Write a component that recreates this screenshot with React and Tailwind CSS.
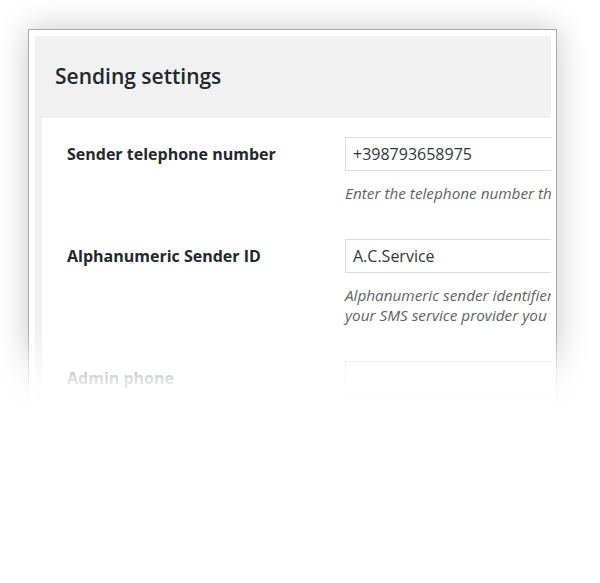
const fields = [
  {
    label: "Sender telephone number",
    value: "+398793658975",
    help: ["Enter the telephone number that will appear as the sender"],
  },
  {
    label: "Alphanumeric Sender ID",
    value: "A.C.Service",
    help: [
      "Alphanumeric sender identifier shown instead of the number",
      "your SMS service provider you can use up to eleven characters",
    ],
  },
  {
    label: "Admin phone",
    value: "",
    help: ["Phone number that receives the notifications"],
  },
];

const SettingRow = ({ field }) => (
  <div className="flex items-start">
    <div className="w-[303px] shrink-0 pl-[25px] h-[33px] flex items-center">
      <span className="text-[16px] font-bold text-[#23282d]">{field.label}</span>
    </div>
    <div className="flex flex-col">
      <div className="w-[320px] h-[34px] border border-[#ddd] bg-white px-[7px] flex items-center text-[16px] text-[#32373c] whitespace-nowrap">
        {field.value}
      </div>
      <div className="mt-[12px] text-[15.3px] italic text-[#5f6468] leading-[20px]">
        {field.help.map((line) => (
          <div key={line} className="whitespace-nowrap">
            {line}
          </div>
        ))}
      </div>
    </div>
  </div>
);

export default function App() {
  return (
    <div
      className="relative w-[600px] h-[583px] bg-white overflow-hidden"
      style={{ fontFamily: '"Open Sans", "Liberation Sans", sans-serif' }}
    >
      <div className="ml-[28px] mt-[29px] w-[529px] h-[400px] border border-[#aaa] bg-white shadow-[0_0_30px_rgba(0,0,0,0.22)] pt-[6px] pl-[6px] pr-[5px]">
        <div className="h-full bg-[#f1f1f1] pl-[7px] flex flex-col overflow-hidden">
          <div className="h-[82px] shrink-0 flex items-center pl-[13px]">
            <h2 className="text-[21px] font-semibold text-[#23282d]">Sending settings</h2>
          </div>
          <div className="flex-1 bg-white overflow-hidden pt-[19px] flex flex-col gap-[36px]">
            {fields.map((f) => (
              <SettingRow key={f.label} field={f} />
            ))}
          </div>
        </div>
      </div>
      {/* fade out towards the bottom */}
      <div className="absolute left-0 right-0 top-[330px] h-[82px] bg-linear-to-b from-white/0 via-white/85 via-60% to-white" />
      <div className="absolute left-0 right-0 top-[411px] bottom-0 bg-white" />
    </div>
  );
}
